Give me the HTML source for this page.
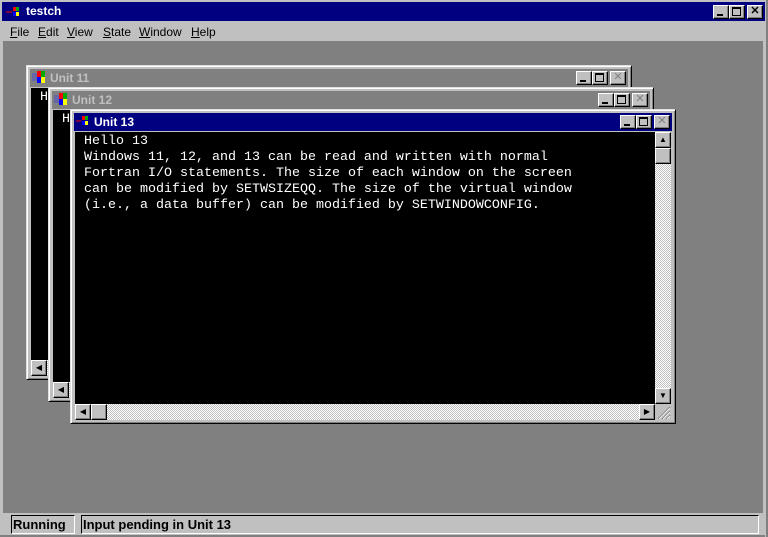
<!DOCTYPE html>
<html><head><style>
*{margin:0;padding:0;box-sizing:border-box}
body{width:768px;height:537px;background:#c0c0c0;position:relative;overflow:hidden;font-family:"Liberation Sans",sans-serif;font-size:12px}
.abs{position:absolute}
.btn{position:absolute;width:16px;height:14px;background:#c0c0c0;border:1px solid;border-color:#fff #000 #000 #fff;box-shadow:inset -1px -1px #808080}
.win{position:absolute;background:#c0c0c0;border:1px solid;border-color:#dfdfdf #000 #000 #dfdfdf;box-shadow:inset 1px 1px #fff,inset -1px -1px #808080}
.tb{position:absolute;left:3px;right:3px;top:3px;height:18px;font-weight:bold;font-size:12px;line-height:18px;padding-left:20px}
.client{position:absolute;left:4px;top:22px;right:20px;bottom:19px;background:#000;color:#fff;font-family:"Liberation Mono",monospace;font-size:13.33px;line-height:16px;padding:2px 0 0 9px;white-space:pre;overflow:hidden}
.vs{position:absolute;right:4px;top:22px;width:16px;bottom:19px;background:repeating-conic-gradient(#c0c0c0 0 25%,#fff 0 50%) 0 0/2px 2px}
.hs{position:absolute;left:4px;right:20px;bottom:3px;height:16px;background:repeating-conic-gradient(#c0c0c0 0 25%,#fff 0 50%) 0 0/2px 2px}
.ico{position:absolute;left:3px;top:3px;width:14px;height:12px}
.u{text-decoration:underline}
.m{position:absolute;top:24px;font-size:12px;line-height:16px}
</style></head><body>
<div class="abs" style="left:2px;top:2px;width:764px;height:19px;background:#000080;color:#fff;font-weight:bold;font-size:12px;line-height:19px;padding-left:24px">testch</div>
<svg class="abs" style="left:5px;top:6px" width="16" height="12"><path d="M1 6h6" stroke="#f00" stroke-width="1"/><rect x="8" y="1" width="3" height="4" fill="#f00"/><rect x="11" y="1" width="3" height="4" fill="#0a0"/><rect x="8" y="6" width="3" height="4" fill="#00f"/><rect x="11" y="6" width="3" height="4" fill="#ff0"/></svg>
<div class="btn" style="left:713px;top:5px"><div class="abs" style="left:3px;top:8px;width:6px;height:2px;background:#000"></div></div>
<div class="btn" style="left:729px;top:5px"><div class="abs" style="left:2px;top:1px;width:9px;height:9px;border:1px solid #000;border-top-width:2px"></div></div>
<div class="btn" style="left:747px;top:5px;font-size:11px;line-height:11px;text-align:center;font-weight:bold">✕</div>
<div class="m" style="left:10px"><span class="u">F</span>ile</div>
<div class="m" style="left:38px"><span class="u">E</span>dit</div>
<div class="m" style="left:67px"><span class="u">V</span>iew</div>
<div class="m" style="left:103px"><span class="u">S</span>tate</div>
<div class="m" style="left:139px"><span class="u">W</span>indow</div>
<div class="m" style="left:191px"><span class="u">H</span>elp</div>
<div class="abs" style="left:3px;top:41px;width:760px;height:472px;background:#808080"></div>

<div class="win" style="left:26px;top:65px;width:606px;height:315px">
 <div class="tb" style="background:#808080;color:#c0c0c0">Unit 11</div>
 <svg class="ico" style="left:5px;top:5px" width="14" height="12"><rect x="0" y="2" width="5" height="8" fill="#66a"/><rect x="5" y="0" width="4" height="6" fill="#f00"/><rect x="9" y="0" width="4" height="6" fill="#0a0"/><rect x="5" y="6" width="4" height="6" fill="#00f"/><rect x="9" y="6" width="4" height="6" fill="#ff0"/></svg>
 <div class="client">Hello 11</div>
 <div class="btn" style="right:39px;top:5px"><div class="abs" style="left:3px;top:8px;width:6px;height:2px;background:#000"></div></div>
 <div class="btn" style="right:23px;top:5px"><div class="abs" style="left:2px;top:1px;width:9px;height:9px;border:1px solid #000;border-top-width:2px"></div></div>
 <div class="btn" style="right:5px;top:5px;color:#808080;font-size:11px;line-height:11px;text-align:center">✕</div>
 <div class="hs"></div>
 <div class="btn" style="left:4px;bottom:3px;width:16px;height:16px;font-size:8px;line-height:14px;text-align:center">◀</div>
</div>
<div class="win" style="left:48px;top:87px;width:606px;height:315px">
 <div class="tb" style="background:#808080;color:#c0c0c0">Unit 12</div>
 <svg class="ico" style="left:5px;top:5px" width="14" height="12"><rect x="0" y="2" width="5" height="8" fill="#66a"/><rect x="5" y="0" width="4" height="6" fill="#f00"/><rect x="9" y="0" width="4" height="6" fill="#0a0"/><rect x="5" y="6" width="4" height="6" fill="#00f"/><rect x="9" y="6" width="4" height="6" fill="#ff0"/></svg>
 <div class="client">Hello 12</div>
 <div class="btn" style="right:39px;top:5px"><div class="abs" style="left:3px;top:8px;width:6px;height:2px;background:#000"></div></div>
 <div class="btn" style="right:23px;top:5px"><div class="abs" style="left:2px;top:1px;width:9px;height:9px;border:1px solid #000;border-top-width:2px"></div></div>
 <div class="btn" style="right:5px;top:5px;color:#808080;font-size:11px;line-height:11px;text-align:center">✕</div>
 <div class="hs"></div>
 <div class="btn" style="left:4px;bottom:3px;width:16px;height:16px;font-size:8px;line-height:14px;text-align:center">◀</div>
</div>
<div class="win" style="left:70px;top:109px;width:606px;height:315px">
 <div class="tb" style="background:#000080;color:#fff">Unit 13</div>
 <svg class="ico" style="left:5px;top:5px" width="14" height="12"><path d="M0 6h5" stroke="#f00"/><rect x="6" y="1" width="3" height="4" fill="#f00"/><rect x="9" y="1" width="3" height="4" fill="#0a0"/><rect x="6" y="6" width="3" height="4" fill="#00f"/><rect x="9" y="6" width="3" height="4" fill="#ff0"/></svg>
 <div class="client">Hello 13
Windows 11, 12, and 13 can be read and written with normal
Fortran I/O statements. The size of each window on the screen
can be modified by SETWSIZEQQ. The size of the virtual window
(i.e., a data buffer) can be modified by SETWINDOWCONFIG.</div>
 <div class="btn" style="right:39px;top:5px"><div class="abs" style="left:3px;top:8px;width:6px;height:2px;background:#000"></div></div>
 <div class="btn" style="right:23px;top:5px"><div class="abs" style="left:2px;top:1px;width:9px;height:9px;border:1px solid #000;border-top-width:2px"></div></div>
 <div class="btn" style="right:5px;top:5px;color:#808080;font-size:11px;line-height:11px;text-align:center">✕</div>
 <div class="vs"></div>
 <div class="btn" style="right:4px;top:22px;width:16px;height:16px;font-size:8px;line-height:14px;text-align:center">▲</div>
 <div class="btn" style="right:4px;top:38px;width:16px;height:16px"></div>
 <div class="btn" style="right:4px;bottom:19px;width:16px;height:16px;font-size:8px;line-height:14px;text-align:center">▼</div>
 <div class="hs"></div>
 <div class="btn" style="left:4px;bottom:3px;width:16px;height:16px;font-size:8px;line-height:14px;text-align:center">◀</div>
 <div class="btn" style="left:20px;bottom:3px;width:16px;height:16px"></div>
 <div class="btn" style="right:20px;bottom:3px;width:16px;height:16px;font-size:8px;line-height:14px;text-align:center">▶</div>
 <svg class="abs" style="right:4px;bottom:3px" width="16" height="16"><path d="M15 3L3 15M15 7L7 15M15 11L11 15" stroke="#808080" stroke-width="1.2"/><path d="M15 4L4 15M15 8L8 15M15 12L12 15" stroke="#fff" stroke-width="0.8"/></svg>
</div>

<div class="abs" style="left:0;top:513px;width:768px;height:24px;background:#c0c0c0"></div>
<div class="abs" style="left:11px;top:515px;width:64px;height:19px;border:1px solid;border-color:#000 #fff #fff #000;font-size:13px;font-weight:bold;line-height:18px;padding-left:1px">Running</div>
<div class="abs" style="left:81px;top:515px;width:678px;height:19px;border:1px solid;border-color:#000 #fff #fff #000;font-size:13px;font-weight:bold;line-height:18px;padding-left:1px">Input pending in Unit 13</div>
<div class="abs" style="left:0;top:535px;width:768px;height:2px;background:#808080"></div>
<div class="abs" style="left:765px;top:0;width:3px;height:537px;background:#808080;border-left:1px solid #c0c0c0"></div>
</body></html>
